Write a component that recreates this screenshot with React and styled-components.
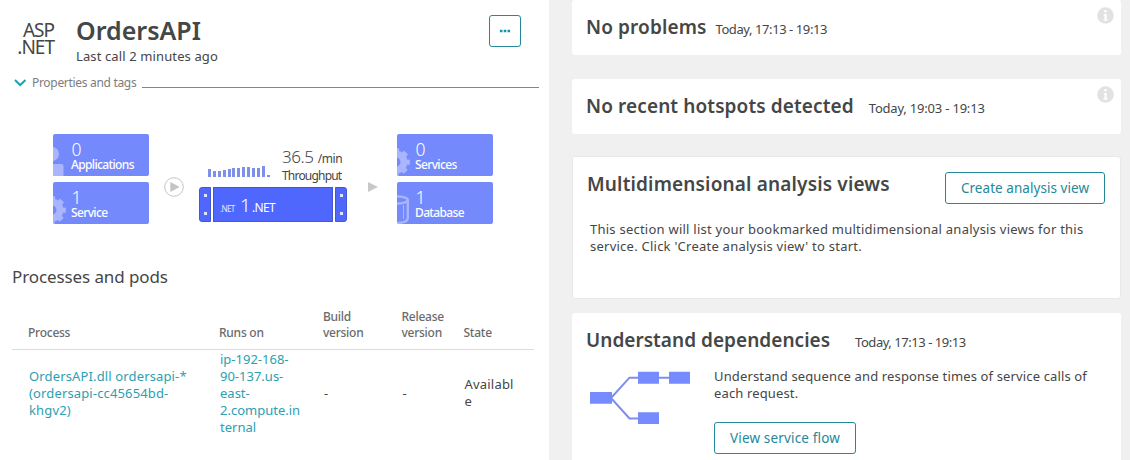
import React from 'react';
import styled, { createGlobalStyle } from 'styled-components';

const Global = createGlobalStyle`
  * { box-sizing: border-box; }
  body { margin: 0; background: #f0f0f0; overflow: hidden; }
`;

const Page = styled.div`
  display: flex;
  gap: 23px;
  height: 460px;
  overflow: hidden;
  font: 400 13px/17px "Noto Sans", sans-serif;
  color: #454646;
`;

/* ---------- left column ---------- */
const Panel = styled.section`
  flex: 0 0 549px;
  background: #fff;
`;
const Header = styled.header`
  display: flex;
  align-items: flex-start;
  height: 75px;
  padding: 15px 28px 0 16px;
`;
const TechLogo = styled.div`
  width: 38px;
  margin: 7px 22px 0 0;
  text-align: right;
  white-space: nowrap;
  font-size: 19px;
  font-weight: 400;
  line-height: 17px;
  letter-spacing: -1px;
`;
const Heading = styled.div`flex: 1;`;
const ServiceName = styled.h1`
  margin: 0 0 3px;
  font-size: 25px;
  font-weight: 600;
  line-height: 30px;
`;
const LastCall = styled.div`
  letter-spacing: 0.12px;
`;
const OutlineButton = styled.button`
  display: inline-flex;
  align-items: center;
  justify-content: center;
  flex: none;
  width: ${(p) => p.$width}px;
  height: 32px;
  padding: 0;
  border: 1px solid #24889a;
  border-radius: 3px;
  background: #fff;
  color: #24889a;
  font: 400 13.5px/17px "Noto Sans", sans-serif;
  letter-spacing: ${(p) => p.$spacing || 0}px;
`;
const Properties = styled.div`
  display: flex;
  align-items: center;
  height: 16px;
  padding: 0 10px 0 14px;
  font-size: 12px;
  line-height: 16px;
  letter-spacing: -0.31px;
  color: #7d7d7d;
  svg { margin-right: 5px; }
`;
const Rule = styled.div`
  flex: 1;
  height: 1px;
  margin: 8px 0 0 6px;
  background: #84868a;
`;

/* ---------- service flow ---------- */
const Flow = styled.div`
  display: flex;
  height: 90px;
  margin: 43px 0 0 53px;
`;
const NodeColumn = styled.div`
  display: flex;
  flex-direction: column;
  gap: 6px;
  width: 96px;
`;
const NodeBox = styled.div`
  position: relative;
  height: 42px;
  padding: 6px 0 0 18px;
  border-radius: 2px;
  overflow: hidden;
  background: #7489fc;
  color: #fff;
`;
const NodeArt = styled.svg`
  position: absolute;
  left: 0;
  top: 0;
`;
const NodeCount = styled.div`
  font-size: 17.5px;
  font-weight: 300;
  line-height: 18px;
  padding-left: 0.5px;
`;
const NodeLabel = styled.div`
  font-size: 12px;
  font-weight: 500;
  line-height: 13px;
  letter-spacing: -0.64px;
`;
const Connector = styled.svg`
  flex: none;
  margin: ${(p) => p.$margin};
`;
const Center = styled.div`width: 148px;`;
const Metrics = styled.div`
  display: flex;
  align-items: flex-end;
  height: 53px;
  padding-left: 9px;
`;
const Bars = styled.div`
  display: flex;
  align-items: flex-end;
  gap: 1.9px;
  width: 74px;
  margin-bottom: 10px;
`;
const Bar = styled.div`
  width: 3px;
  background: #7f90ea;
`;
const Throughput = styled.div`
  padding-bottom: 3px;
  font-size: 12px;
  line-height: 17px;
  letter-spacing: -0.8px;
  white-space: nowrap;
`;
const Rate = styled.div`
  line-height: 17px;
  letter-spacing: -0.4px;
`;
const RateValue = styled.span`
  margin-right: 4px;
  font-size: 17px;
  font-weight: 300;
`;
const Server = styled.div`
  display: flex;
  gap: 2px;
  height: 35px;
`;
const serverFace = `
  background: #4f67fc;
  border: 1px solid #4357d6;
`;
const Ear = styled.div`
  ${serverFace}
  display: flex;
  flex-direction: column;
  align-items: center;
  justify-content: space-between;
  width: 12px;
  padding: 6px 0;
  border-radius: ${(p) => (p.$right ? '0 3px 3px 0' : '3px 0 0 3px')};
`;
const Screw = styled.i`
  width: 3px;
  height: 3px;
  background: #dfe4ff;
`;
const ServerBody = styled.div`
  ${serverFace}
  display: flex;
  align-items: baseline;
  flex: 1;
  padding: 4px 0 0 6px;
  color: #fff;
  line-height: 26px;
`;
const TinyTech = styled.span`
  width: 20px;
  font-size: 8px;
  letter-spacing: -0.6px;
  opacity: 0.85;
`;
const TechCount = styled.span`
  width: 12px;
  font-size: 19px;
  font-weight: 300;
`;
const TechName = styled.span`
  font-size: 12px;
  letter-spacing: -0.7px;
`;

/* ---------- processes table ---------- */
const SectionTitle = styled.h2`
  margin: 41px 0 20px 12px;
  font-size: 17px;
  font-weight: 400;
  line-height: 24px;
  letter-spacing: -0.1px;
`;
const Row = styled.div`
  display: grid;
  grid-template-columns: 191px 104px 78.5px 62px 86.5px;
  width: 522px;
  margin-left: 12px;
`;
const HeadRow = styled(Row)`
  align-items: end;
  height: 41px;
  padding-bottom: 8px;
  border-bottom: 1px solid #dcdcdc;
  color: #6a6b6b;
  font-size: 12px;
  font-weight: 500;
  line-height: 16px;
  letter-spacing: -0.25px;
`;
const HeadCell = styled.div`padding-left: 16px;`;
const BodyRow = styled(Row)`
  align-items: center;
  height: 86px;
`;
const Cell = styled.div`
  padding-left: 17px;
  letter-spacing: ${(p) => p.$spacing || 0}px;
  color: ${(p) => (p.$link ? '#2ba0b0' : '#454646')};
`;

/* ---------- right column ---------- */
const Cards = styled.main`
  display: flex;
  flex-direction: column;
  flex: 0 0 549px;
`;
const Card = styled.section`
  position: relative;
  flex: none;
  height: ${(p) => p.$height}px;
  margin-bottom: ${(p) => p.$gap || 0}px;
  padding: 14px 15px 0 14px;
  border-radius: 3px;
  background: #fff;
`;
const BorderedCard = styled(Card)`
  border: 1px solid #e8e8e8;
  padding: 15px 15px 0 14px;
`;
const TitleRow = styled.div`
  display: flex;
  align-items: baseline;
  white-space: nowrap;
`;
const ActionRow = styled.div`
  display: flex;
  justify-content: space-between;
`;
const CardTitle = styled.h2`
  margin: ${(p) => (p.$raised ? '-1px' : 0)} ${(p) => p.$gap || 0}px 0 0;
  font-size: 19px;
  font-weight: 600;
  line-height: 26px;
  letter-spacing: ${(p) => p.$spacing}px;
`;
const Timeframe = styled.span`letter-spacing: ${(p) => p.$spacing ?? -0.42}px;`;
const InfoIcon = styled.svg`
  position: absolute;
  right: 7px;
  top: 7px;
`;
const Copy = styled.p`
  margin: ${(p) => p.$margin};
  letter-spacing: ${(p) => p.$spacing}px;
`;
const Dependencies = styled.div`
  display: flex;
  gap: 24px;
  margin: 15px 0 0 4px;
  svg { flex: none; margin-top: 3px; }
`;

const Info = () => (
  <InfoIcon width="17" height="17" viewBox="0 0 17 17">
    <circle cx="8.5" cy="8.5" r="8.3" fill="#e2e2e2" />
    <path d="M7.3 3h2.4v2.2H7.3zM6.7 7h3v5.4h.8v1.4H6.5v-1.4h1V8.4h-.8z" fill="#fff" />
  </InfoIcon>
);

const art = {
  app: <g fill="#a9b6fd"><circle cx="-1" cy="20" r="7" /><path d="M0 30h8.5q2 0 2 2v10H0z" /></g>,
  gear: (
    <g fill="none" stroke="#a9b6fd">
      <circle cx="-1" cy="28" r="8" strokeWidth="7" />
      <circle cx="-1" cy="28" r="12.4" strokeWidth="3" strokeDasharray="5.6 4.14" strokeDashoffset="2.8" />
    </g>
  ),
  db: (
    <g fill="none" stroke="#a9b6fd" strokeWidth="2.4">
      <ellipse cx="-1" cy="18" rx="11.8" ry="3.6" />
      <path d="M10.8 18v18q0 5-12 5" />
      <path d="M6.5 23v14" strokeWidth="1" />
    </g>
  ),
};

const FlowNode = ({ icon, count, label }) => (
  <NodeBox>
    <NodeArt width="20" height="42">{art[icon]}</NodeArt>
    <NodeCount>{count}</NodeCount>
    <NodeLabel>{label}</NodeLabel>
  </NodeBox>
);

const throughput = [8, 6.5, 6, 7, 8, 9.5, 9.5, 10.2, 10.2, 9.5, 9.2, 11, 2.5];

export default function App() {
  return (
    <Page>
      <Global />
      <Panel>
        <Header>
          <TechLogo>ASP<br />.NET</TechLogo>
          <Heading>
            <ServiceName>OrdersAPI</ServiceName>
            <LastCall>Last call 2 minutes ago</LastCall>
          </Heading>
          <OutlineButton $width={32} aria-label="More">
            <svg width="12" height="4" viewBox="0 0 12 4" fill="#1496a8">
              <path d="M.9.7h2.6v2.6H.9zM4.7.7h2.6v2.6H4.7zM8.5.7h2.6v2.6H8.5z" />
            </svg>
          </OutlineButton>
        </Header>
        <Properties>
          <svg width="13" height="8" viewBox="0 0 13 8" fill="none" stroke="#1aa2b8" strokeWidth="2">
            <path d="M1 1l5.2 5L11.5 1" />
          </svg>
          Properties and tags
          <Rule />
        </Properties>

        <Flow>
          <NodeColumn>
            <FlowNode icon="app" count="0" label="Applications" />
            <FlowNode icon="gear" count="1" label="Service" />
          </NodeColumn>
          <Connector $margin="43px 15px 0" width="20" height="20" viewBox="0 0 20 20">
            <circle cx="10" cy="10" r="9.3" fill="#fff" stroke="#c4c4c4" />
            <path d="M6.3 5v10l9.4-5z" fill="#c4c4c4" />
          </Connector>
          <Center>
            <Metrics>
              <Bars>
                {throughput.map((h, i) => <Bar key={i} style={{ height: h }} />)}
              </Bars>
              <Throughput>
                <Rate><RateValue>36.5</RateValue>/min</Rate>
                Throughput
              </Throughput>
            </Metrics>
            <Server>
              <Ear><Screw /><Screw /></Ear>
              <ServerBody>
                <TinyTech>.NET</TinyTech>
                <TechCount>1</TechCount>
                <TechName>.NET</TechName>
              </ServerBody>
              <Ear $right><Screw /><Screw /></Ear>
            </Server>
          </Center>
          <Connector $margin="48px 19px 0 21px" width="10" height="10" viewBox="0 0 10 10">
            <path d="M0 0v10l10-5z" fill="#c8c8c8" />
          </Connector>
          <NodeColumn>
            <FlowNode icon="gear" count="0" label="Services" />
            <FlowNode icon="db" count="1" label="Database" />
          </NodeColumn>
        </Flow>

        <SectionTitle>Processes and pods</SectionTitle>
        <HeadRow>
          <HeadCell>Process</HeadCell>
          <HeadCell>Runs on</HeadCell>
          <HeadCell>Build<br />version</HeadCell>
          <HeadCell>Release<br />version</HeadCell>
          <HeadCell>State</HeadCell>
        </HeadRow>
        <BodyRow>
          <Cell $link $spacing={0.14}>OrdersAPI.dll ordersapi-*<br />(ordersapi-cc45654bd-<br />khgv2)</Cell>
          <Cell $link>ip-192-168-<br />90-137.us-<br />east-<br />2.compute.in<br />ternal</Cell>
          <Cell>-</Cell>
          <Cell>-</Cell>
          <Cell $spacing={0.2}>Availabl<br />e</Cell>
        </BodyRow>
      </Panel>

      <Cards>
        <Card $height={55} $gap={24}>
          <TitleRow>
            <CardTitle $spacing={0.12} $gap={9}>No problems</CardTitle>
            <Timeframe>Today, 17:13 - 19:13</Timeframe>
          </TitleRow>
          <Info />
        </Card>
        <Card $height={55} $gap={22}>
          <TitleRow>
            <CardTitle $spacing={0.11} $gap={15}>No recent hotspots detected</CardTitle>
            <Timeframe $spacing={-0.2}>Today, 19:03 - 19:13</Timeframe>
          </TitleRow>
          <Info />
        </Card>
        <BorderedCard $height={143} $gap={14}>
          <ActionRow>
            <CardTitle $spacing={0.16} $raised>Multidimensional analysis views</CardTitle>
            <OutlineButton $width={160} $spacing={0.05}>Create analysis view</OutlineButton>
          </ActionRow>
          <Copy $margin="17px 0 0 3px" $spacing={0.24}>
            This section will list your bookmarked multidimensional analysis views for this<br />
            service. Click 'Create analysis view' to start.
          </Copy>
        </BorderedCard>
        <Card $height={170}>
          <TitleRow>
            <CardTitle $spacing={0.03} $gap={25}>Understand dependencies</CardTitle>
            <Timeframe $spacing={-0.46}>Today, 17:13 - 19:13</Timeframe>
          </TitleRow>
          <Dependencies>
            <svg width="100" height="54" viewBox="0 0 100 54">
              <path d="M21 27L39.5 6.7H80M21 27l18.5 20.4H50" fill="none" stroke="#7f8fe8" strokeWidth="2" />
              <path d="M0 21h22v11.7H0zM48 .7h21v12H48zM79 .7h21v12H79zM48 41.3h21V53H48z" fill="#768bfd" />
            </svg>
            <div>
              <Copy $margin="0 0 20px" $spacing={0.14}>
                Understand sequence and response times of service calls of<br />
                each request.
              </Copy>
              <OutlineButton $width={142} $spacing={0.16}>View service flow</OutlineButton>
            </div>
          </Dependencies>
        </Card>
      </Cards>
    </Page>
  );
}
